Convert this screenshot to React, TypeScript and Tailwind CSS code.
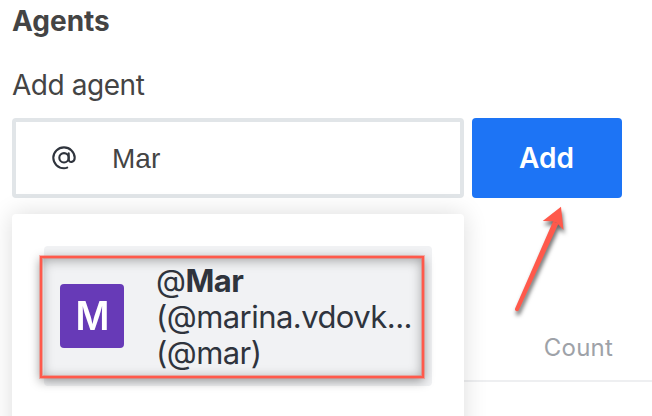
import React from "react";

function AtIcon() {
  return (
    <svg className="h-6 w-6" viewBox="0 0 24 24" fill="none" stroke="#2f343d" strokeWidth="2.1" strokeLinecap="round">
      <circle cx="12" cy="11.8" r="4.7" />
      <path d="M16.7 7.4v5.9c0 4.2 6 3.2 6-1.6A10.7 10.4 0 1 0 12 22.2c1.3 0 2.2-.2 3.2-.6" />
    </svg>
  );
}

function AgentOption() {
  return (
    <div className="flex h-[140px] items-center rounded bg-[#f1f2f4] pl-4">
      <div className="flex h-16 w-16 shrink-0 items-center justify-center rounded bg-[#673ab7] text-[40px] font-semibold text-white">
        <span className="scale-x-[.92]">M</span>
      </div>
      <div className="ml-8 min-w-0 pt-px text-[31px] leading-9 tracking-[-0.55px] text-[#2f343d]">
        <div>@<span className="font-bold">Mar</span></div>
        <div>(@marina.vdovk...</div>
        <div>(@mar)</div>
      </div>
    </div>
  );
}

function Arrow() {
  return (
    <svg
      className="absolute left-[500px] top-[200px] h-[130px] w-[80px] drop-shadow-[1px_4px_2px_rgba(0,0,0,0.6)]"
      viewBox="0 0 80 130"
      fill="#ff594b"
    >
      <path d="M15.2 108.3 53 21.5 58.5 23.5 18.9 110A2 2 0 0 1 15.2 108.3Z" />
      <path d="M61 6.7 63.5 30 57 23 52 21.2 42.7 20.9Z" />
    </svg>
  );
}

export default function App() {
  return (
    <main className="relative flex h-[416px] w-[652px] flex-col overflow-hidden bg-white font-['Inter',sans-serif] text-[#444]">
      <h1 className="ml-3 mt-[3px] text-[28px] font-bold leading-9">Agents</h1>
      <label className="ml-3 mt-7 text-[28px] leading-9 tracking-[-0.45px]">Add agent</label>
      <div className="ml-3 mt-[15px] flex gap-2">
        <div className="flex h-20 w-[452px] items-center rounded border-4 border-[#e1e5e8] pl-9">
          <AtIcon />
          <span className="ml-9 pt-0.5 font-['Liberation_Sans',sans-serif] text-[28px]">Mar</span>
        </div>
        <button className="h-20 w-[150px] rounded bg-[#1d74f5] pr-px text-[28px] font-semibold text-white">Add</button>
      </div>
      <div className="ml-3 mt-[132px] flex h-[52px] justify-end border-b-2 border-[#eeeff1] pr-[39px] text-2xl leading-9 tracking-[0.2px] text-[#9ea2a8]">
        Count
      </div>
      <div className="absolute left-3 top-[214px] h-[240px] w-[452px] rounded bg-white px-8 pt-8 shadow-[0_0_24px_rgba(0,0,0,0.14)]">
        <AgentOption />
      </div>
      <div className="absolute left-10 top-64 h-[122px] w-[384px] border-2 border-[#ff594b] shadow-[0_0_0_1px_rgba(255,89,75,0.4),inset_0_0_0_1px_rgba(255,89,75,0.4),0_3px_10px_rgba(0,0,0,0.4),inset_0_2px_12px_rgba(0,0,0,0.35)]" />
      <Arrow />
    </main>
  );
}
